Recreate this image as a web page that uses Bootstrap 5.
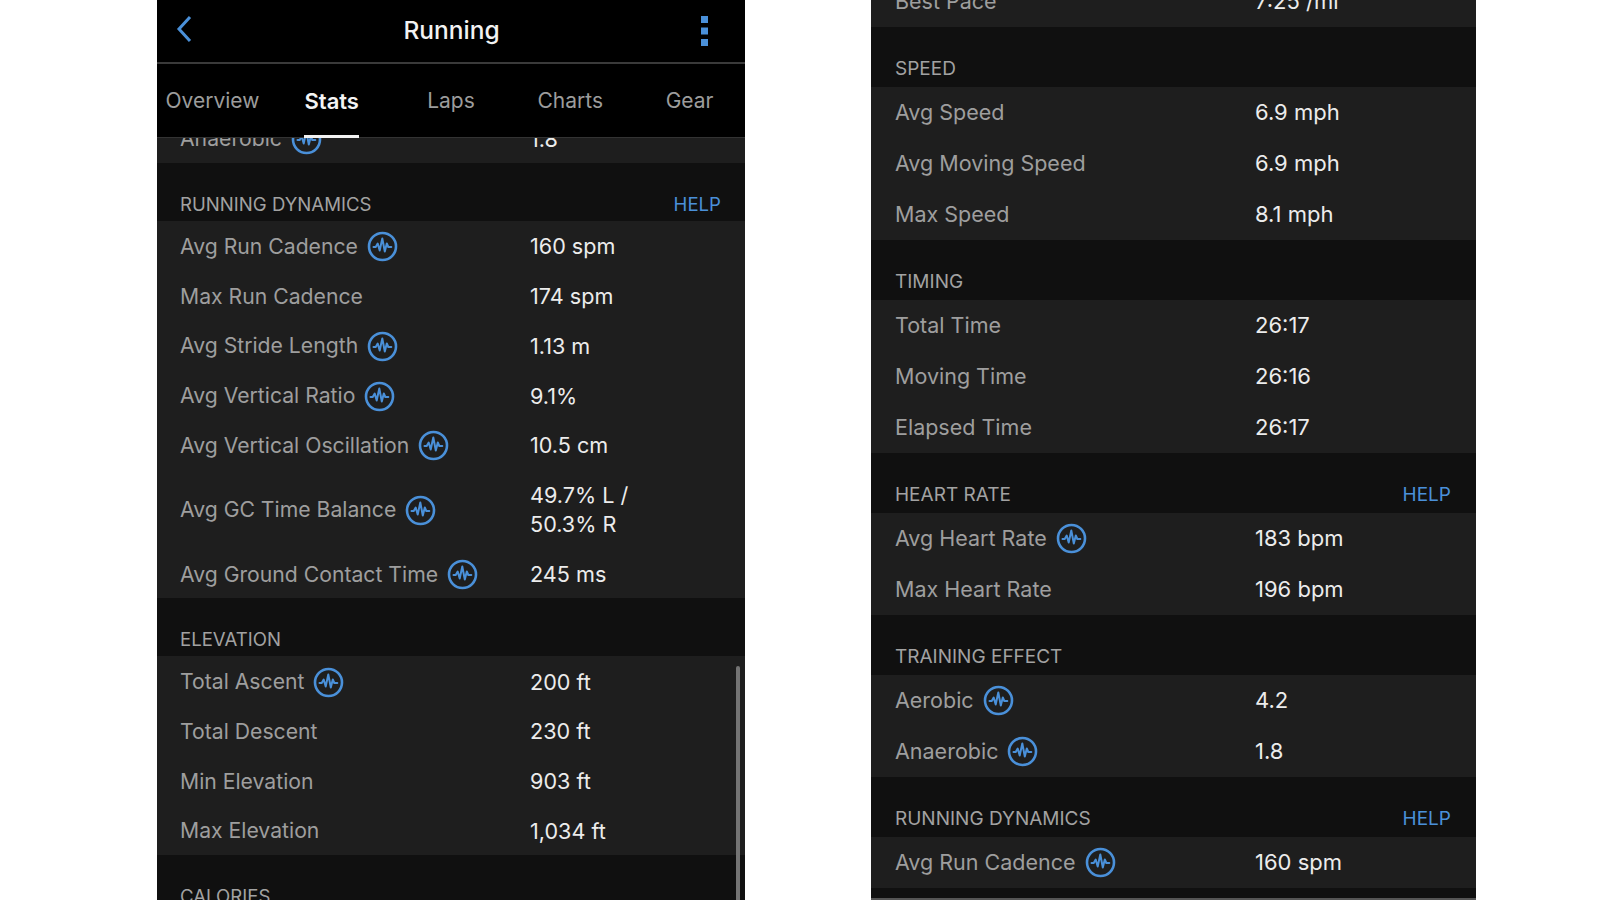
<!DOCTYPE html>
<html lang="en">
<head>
  <meta charset="UTF-8" />
  <meta name="viewport" content="width=device-width, initial-scale=1.0" />
  <title>Running | Stats</title>
  <link href="https://cdn.jsdelivr.net/npm/bootstrap@5.3.3/dist/css/bootstrap.min.css" rel="stylesheet" />
  <style>
    html, body { height: 100%; }
    body {
      background: #fff;
      overflow: hidden;
      font-family: Inter, "Liberation Sans", sans-serif;
    }
    .shots { height: 900px; padding-left: 157px; gap: 126px; }
    .phone { height: 900px; background: #101010; overflow: hidden; position: relative; }
    .phone-left { width: 588px; }
    .phone-right { width: 605px; border-bottom: 2px solid #555; }

    .top-bar { height: 64px; background: #000; border-bottom: 2px solid #3a3a3a; padding: 0 37px 0 19px; }
    .top-bar h1 { font-size: 24.5px; font-weight: 500; color: #f2f2f2; margin: 0; }
    .back-wrap { width: 26px; margin-bottom: 4px; line-height: 0; }
    .tabs-row { height: 74px; background: #000; border-bottom: 1px solid #333; position: relative; z-index: 2; }
    .tab-cell { flex: 0 0 119.3px; text-align: center; font-size: 21px; color: #9c9c9c; line-height: 74px; height: 74px; }
    .tab-cell.on { color: #f4f4f4; font-weight: 600; font-size: 22px; }
    .tab-cell.on span { display: inline-block; height: 74px; border-bottom: 3px solid #f2f2f2; }

    .scroll-left { margin-top: -25px; }
    .scroll-right { margin-top: -24px; }
    .panel-list { background: #1e1e1e; }
    .section-head { color: #a2a2a2; }
    .phone-left .section-head { height: 58.2px; padding-bottom: 2px; font-size: 18.6px; }
    .phone-right .section-head { height: 60px; padding-bottom: 3.5px; font-size: 19px; }
    .help-link { color: #4a90d9; text-decoration: none; }
    .stat-row { display: flex; align-items: center; }
    .phone-left .stat-row { height: 49.7px; padding-top: 2.5px; }
    .phone-right .stat-row { height: 51px; }
    .phone-left .stat-row.two-line { height: 79px; }
    .phone-left .pad-x { padding-left: 23px; padding-right: 24px; }
    .phone-right .pad-x { padding-left: 24px; padding-right: 25px; }
    .stat-name { color: #9e9e9e; display: flex; align-items: center; gap: 9px; }
    .phone-left .stat-name { flex: 0 0 350px; font-size: 21.2px; }
    .phone-right .stat-name { flex: 0 0 360px; font-size: 21.5px; }
    .stat-val { color: #ececec; line-height: 29px; }
    .phone-left .stat-val { font-size: 21.6px; }
    .phone-right .stat-val { font-size: 22px; }
    .pulse-icon { width: 31px; height: 31px; flex: none; }
    .scroll-thumb { position: absolute; right: 5px; top: 666px; bottom: 0; width: 4px; background: #747474; border-radius: 2px 2px 0 0; }
  </style>
</head>
<body>

<svg width="0" height="0" class="d-block position-absolute">
  <symbol id="pulse" viewBox="0 0 31 31">
    <circle cx="15.5" cy="15.5" r="13.5" fill="none" stroke="#4a90d9" stroke-width="2.6" />
    <path d="M6.5 16h2.2l2-3.5 2 7 2.6-12 2.5 13 2-8 1.5 3.5h3" fill="none" stroke="#4a90d9" stroke-width="2" stroke-linejoin="round" stroke-linecap="round" />
  </symbol>
</svg>

<div class="shots d-flex">
  <div class="phone phone-left">
    <div class="top-bar d-flex align-items-center justify-content-between">
      <div class="back-wrap">
        <svg width="16" height="28" viewBox="0 0 16 28"><path d="M14 2 3 14l11 12" fill="none" stroke="#4a90d9" stroke-width="3" /></svg>
      </div>
      <h1>Running</h1>
      <svg width="7" height="30" viewBox="0 0 7 30"><rect width="7" height="7" fill="#4a90d9" /><rect y="11.5" width="7" height="7" fill="#4a90d9" /><rect y="23" width="7" height="7" fill="#4a90d9" /></svg>
    </div>
    <div class="tabs-row d-flex justify-content-center">
      <div class="tab-cell">Overview</div>
      <div class="tab-cell on"><span>Stats</span></div>
      <div class="tab-cell">Laps</div>
      <div class="tab-cell">Charts</div>
      <div class="tab-cell">Gear</div>
    </div>
    <div id="leftList" class="scroll-left"></div>
    <div class="scroll-thumb"></div>
  </div>

  <div class="phone phone-right">
    <div id="rightList" class="scroll-right"></div>
  </div>
</div>

<script>
  const leftData = [
    { rows: [['Anaerobic', '1.8', 1]] },
    { title: 'RUNNING DYNAMICS', help: 1, rows: [
      ['Avg Run Cadence', '160 spm', 1],
      ['Max Run Cadence', '174 spm'],
      ['Avg Stride Length', '1.13 m', 1],
      ['Avg Vertical Ratio', '9.1%', 1],
      ['Avg Vertical Oscillation', '10.5 cm', 1],
      ['Avg GC Time Balance', '49.7% L /<br>50.3% R', 1, 1],
      ['Avg Ground Contact Time', '245 ms', 1]
    ]},
    { title: 'ELEVATION', rows: [
      ['Total Ascent', '200 ft', 1],
      ['Total Descent', '230 ft'],
      ['Min Elevation', '903 ft'],
      ['Max Elevation', '1,034 ft']
    ]},
    { title: 'CALORIES', rows: [] }
  ];

  const rightData = [
    { rows: [['Best Pace', '7:25 /mi']] },
    { title: 'SPEED', rows: [
      ['Avg Speed', '6.9 mph'],
      ['Avg Moving Speed', '6.9 mph'],
      ['Max Speed', '8.1 mph']
    ]},
    { title: 'TIMING', rows: [
      ['Total Time', '26:17'],
      ['Moving Time', '26:16'],
      ['Elapsed Time', '26:17']
    ]},
    { title: 'HEART RATE', help: 1, rows: [
      ['Avg Heart Rate', '183 bpm', 1],
      ['Max Heart Rate', '196 bpm']
    ]},
    { title: 'TRAINING EFFECT', rows: [
      ['Aerobic', '4.2', 1],
      ['Anaerobic', '1.8', 1]
    ]},
    { title: 'RUNNING DYNAMICS', help: 1, rows: [
      ['Avg Run Cadence', '160 spm', 1]
    ]}
  ];

  const icon = '<svg class="pulse-icon"><use href="#pulse" /></svg>';

  function renderList(id, groups) {
    document.getElementById(id).innerHTML = groups.map(g => `
      ${g.title ? `<div class="section-head pad-x d-flex align-items-end justify-content-between">
        <span>${g.title}</span>
        ${g.help ? '<a href="#" class="help-link">HELP</a>' : ''}
      </div>` : ''}
      <div class="panel-list">
        ${g.rows.map(r => `
          <div class="stat-row pad-x${r[3] ? ' two-line' : ''}">
            <div class="stat-name">${r[0]}${r[2] ? icon : ''}</div>
            <div class="stat-val">${r[1]}</div>
          </div>`).join('')}
      </div>`).join('');
  }

  renderList('leftList', leftData);
  renderList('rightList', rightData);
</script>
<script src="https://cdn.jsdelivr.net/npm/bootstrap@5.3.3/dist/js/bootstrap.bundle.min.js"></script>
</body>
</html>
